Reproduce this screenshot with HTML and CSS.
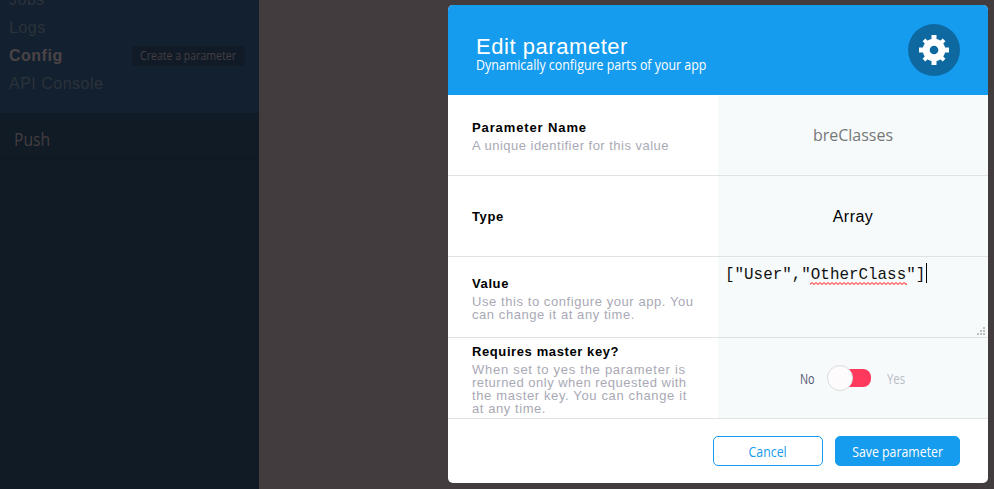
FILE: index.html
```
<!DOCTYPE html>
<html lang="en">
<head>
<meta charset="utf-8">
<title>Edit parameter</title>
<link rel="stylesheet" href="styles.css">
</head>
<body>
<aside class="sidebar">
  <nav class="section">
    <a class="item">Jobs</a>
    <a class="item">Logs</a>
    <a class="item active">Config <span class="create"><span class="narrow create-text">Create a parameter</span></span></a>
    <a class="item">API Console</a>
  </nav>
  <div class="push"><span class="narrow push-text">Push</span></div>
</aside>
<main class="stage">
  <section class="modal">
    <header class="header">
      <div class="titles">
        <h1 class="title">Edit parameter</h1>
        <div class="subtitle"><span class="narrow subtitle-text">Dynamically configure parts of your app</span></div>
      </div>
      <div class="badge">
        <svg width="30" height="30" viewBox="0 0 30 30"><g fill="#fff"><path d="M12.5 0h5v30h-5zM0 12.5h30v5H0z"/><path d="M13 .8h4v28.4h-4zM.8 13h28.4v4H.8z" transform="rotate(45 15 15)"/><circle cx="15" cy="15" r="11.3"/></g><circle cx="15" cy="15" r="4.3" fill="#0e69a1"/></svg>
      </div>
    </header>
    <div class="row">
      <div class="label"><b class="name wide">Parameter Name</b><p class="desc tight">A unique identifier for this value</p></div>
      <div class="field"><span class="param">breClasses</span></div>
    </div>
    <div class="row">
      <div class="label"><b class="name">Type</b></div>
      <div class="field"><span class="type">Array</span></div>
    </div>
    <div class="row">
      <div class="label low"><b class="name">Value</b><p class="desc">Use this to configure your app. You<br>can change it at any time.</p></div>
      <div class="field value"><code class="code">["User","<span class="typo">OtherClass<svg class="squiggle" width="97" height="4"><defs><pattern id="wave" width="4" height="4" patternUnits="userSpaceOnUse"><path d="M-1 3.5l3-3 3 3" fill="none" stroke="#f00"/></pattern></defs><rect width="97" height="4" fill="url(#wave)"/></svg></span>"]</code><i class="caret"></i>
        <svg class="grip" width="8" height="8" fill="#bcbec0"><path d="M6 0h2v2H6zM3 3h2v2H3zM6 3h2v2H6zM0 6h2v2H0zM3 6h2v2H3zM6 6h2v2H6z"/></svg>
      </div>
    </div>
    <div class="row">
      <div class="label low"><b class="name">Requires master key?</b><p class="desc"><span class="loose">When set to yes the parameter is</span><br><span class="tight">returned only when requested with</span><br><span class="mid">the master key. You can change it</span><br>at any time.</p></div>
      <div class="field switch"><span class="no"><span class="narrow no-text">No</span></span><span class="toggle"><i class="track"></i><i class="knob"></i></span><span class="yes"><span class="narrow yes-text">Yes</span></span></div>
    </div>
    <footer class="footer">
      <button class="btn cancel"><span class="narrow cancel-text">Cancel</span></button>
      <button class="btn save"><span class="narrow save-text">Save parameter</span></button>
    </footer>
  </section>
</main>
</body>
</html>
```
FILE: styles.css
```
* { box-sizing: border-box; }
body { margin: 0; width: 994px; height: 489px; overflow: hidden; display: flex; background: #423c3f; font-family: "Liberation Sans", sans-serif; }
.narrow { display: inline-block; white-space: nowrap; font-family: "Open Sans", sans-serif; transform-origin: left center; }
.sidebar { width: 259px; height: 489px; background: #101b25; }
.section { height: 113px; background: #13202f; padding-left: 9px; overflow: hidden; display: flex; flex-direction: column; }
.item { height: 28px; flex: none; line-height: 28px; font-size: 16px; letter-spacing: .5px; color: #2b323a; display: flex; align-items: center; }
.item:first-child { margin-top: -14px; }
.active { font-weight: bold; color: #4a4446; justify-content: space-between; padding-right: 14px; }
.create { width: 113px; height: 20px; border-radius: 4px; background: #111b27; padding-left: 8px; line-height: 20px; font-size: 12px; font-weight: normal; letter-spacing: 0; color: #443e41; }
.create-text { transform: scaleX(.88); }
.push { height: 46px; padding-left: 14px; line-height: 52px; font-size: 18px; color: #443e41; border-bottom: 1px solid #0e1721; }
.push-text { transform: scaleX(.87); }
.stage { flex: 1; padding: 5px 6px 6px 189px; }
.modal { width: 540px; height: 478px; border-radius: 5px; overflow: hidden; background: #fff; }
.header { height: 90px; background: #169cee; color: #fff; display: flex; justify-content: space-between; align-items: center; padding: 0 28px; }
.title { margin: 6px 0 0; font-size: 22px; font-weight: normal; line-height: 26px; letter-spacing: .55px; }
.subtitle { font-size: 14px; line-height: 14px; height: 14px; margin-top: -2px; }
.subtitle-text { transform: scaleX(.886); }
.badge { width: 52px; height: 52px; border-radius: 50%; background: #0e69a1; display: grid; place-items: center; }
.row { height: 81px; display: flex; border-bottom: 1px solid #e0e2e4; }
.label { width: 270px; padding-left: 24px; display: flex; flex-direction: column; justify-content: center; }
.low { padding-top: 2px; }
.name { font-size: 13px; line-height: 17px; letter-spacing: .6px; color: #000; }
.wide { letter-spacing: .88px; }
.desc { margin: 3px 0 0; font-size: 13px; line-height: 13px; letter-spacing: .57px; color: #a9a9b5; white-space: nowrap; }
.tight { letter-spacing: .48px; }
.mid { letter-spacing: .63px; }
.loose { letter-spacing: .72px; }
.field { width: 270px; background: #f6fafb; display: flex; align-items: center; justify-content: center; }
.param { font-family: "Open Sans", sans-serif; font-size: 16px; color: #777; }
.type { font-size: 16px; letter-spacing: .5px; padding-top: 1px; color: #000; }
.value { position: relative; align-items: flex-start; justify-content: flex-start; padding: 6px 7px; }
.code { font-family: "Liberation Mono", monospace; font-size: 15.9px; line-height: 22px; padding-top: 1px; color: #111; }
.typo { position: relative; }
.squiggle { position: absolute; left: -1px; bottom: -2px; }
.caret { width: 1px; height: 20px; margin-left: 1px; background: #000; }
.grip { position: absolute; right: 3px; bottom: 2px; }
.switch { justify-content: flex-start; padding-left: 82px; font-size: 14px; }
.no { width: 27px; color: #52556f; }
.no-text { transform: scaleX(.77); }
.toggle { position: relative; width: 44px; height: 26px; display: flex; align-items: center; justify-content: flex-end; }
.track { width: 32px; height: 18px; border-radius: 8px; background: #ff395e; }
.knob { position: absolute; left: 0; top: 0; width: 26px; height: 26px; border-radius: 50%; background: #fdfbfc; border: 1px solid #d9dddf; }
.yes { margin-left: 16px; color: #b8bac4; }
.yes-text { transform: scaleX(.81); }
.footer { height: 64px; padding: 0 28px; display: flex; align-items: center; justify-content: flex-end; gap: 12px; }
.btn { height: 30px; border: 1px solid #169cee; border-radius: 5px; padding: 2px 0 0; font-size: 14px; line-height: 26px; }
.btn .narrow { transform-origin: center; }
.cancel { width: 110px; background: #fff; color: #169cee; }
.save { width: 125px; background: #169cee; color: #fff; }
.cancel-text { transform: scaleX(.88); }
.save-text { transform: scaleX(.88); }
```
